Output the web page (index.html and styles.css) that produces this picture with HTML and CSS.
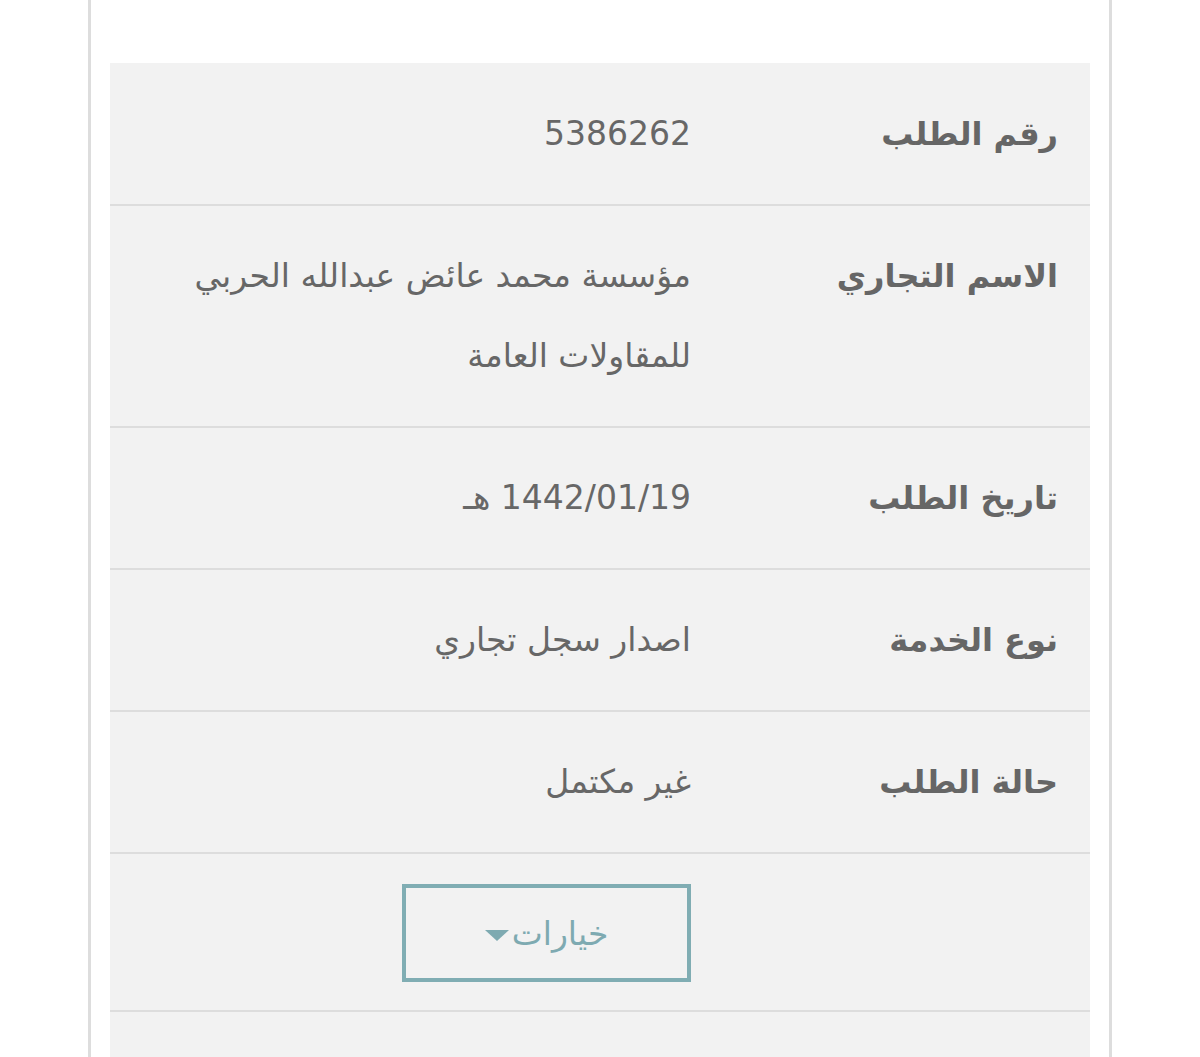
FILE: index.html
```html
<!DOCTYPE html>
<html lang="ar" dir="rtl">
<head>
    <meta charset="UTF-8">
    <meta name="viewport" content="width=device-width, initial-scale=1.0">
    <title>تفاصيل الطلب</title>
    <link rel="stylesheet" href="styles.css">
</head>
<body>
    <div class="card">
        <div class="details">
            <div class="row">
                <div class="label">رقم الطلب</div>
                <div class="value">5386262</div>
            </div>
            <div class="row">
                <div class="label">الاسم التجاري</div>
                <div class="value">مؤسسة محمد عائض عبدالله الحربي للمقاولات العامة</div>
            </div>
            <div class="row">
                <div class="label">تاريخ الطلب</div>
                <div class="value">1442/01/19 هـ</div>
            </div>
            <div class="row">
                <div class="label">نوع الخدمة</div>
                <div class="value">اصدار سجل تجاري</div>
            </div>
            <div class="row">
                <div class="label">حالة الطلب</div>
                <div class="value">غير مكتمل</div>
            </div>
            <div class="row row-actions">
                <div class="label"></div>
                <div class="value">
                    <button class="options">خيارات<span class="caret"></span></button>
                </div>
            </div>
            <div class="row">
                <div class="label">&nbsp;</div>
                <div class="value">&nbsp;</div>
            </div>
        </div>
    </div>
</body>
</html>
```

FILE: styles.css
```css
body {
    margin: 0;
    background: #fff;
    font-family: "DejaVu Sans", "Noto Sans", sans-serif;
    color: #666;
}
.card {
    margin: 0 88px;
    border-left: 3px solid #ddd;
    border-right: 3px solid #ddd;
    padding: 63px 19px 0;
    min-height: 1100px;
}
.details {
    background: #f2f2f2;
}
.row {
    display: flex;
    border-bottom: 2px solid #ddd;
    padding: 30px 0;
}
.row:first-child {
    padding-top: 31px;
}
.label {
    width: 367px;
    padding-right: 32px;
    flex-shrink: 0;
    font-size: 32px;
    font-weight: bold;
    line-height: 80px;
    color: #666;
}
.value {
    flex: 1;
    padding-left: 50px;
    font-size: 33px;
    line-height: 80px;
    color: #676767;
}
.row-actions {
    padding: 30px 0 28px;
}
.row-actions .label {
    line-height: 98px;
}
.options {
    display: flex;
    align-items: center;
    justify-content: center;
    width: 289px;
    height: 98px;
    border: 4px solid #80adb3;
    background: transparent;
    font-family: inherit;
    font-size: 33px;
    color: #7eaab1;
    padding: 0;
    cursor: pointer;
}
.caret {
    width: 0;
    height: 0;
    border-left: 12px solid transparent;
    border-right: 12px solid transparent;
    border-top: 11px solid #7eaab1;
    margin-right: 3px;
    margin-top: 4px;
}
```
